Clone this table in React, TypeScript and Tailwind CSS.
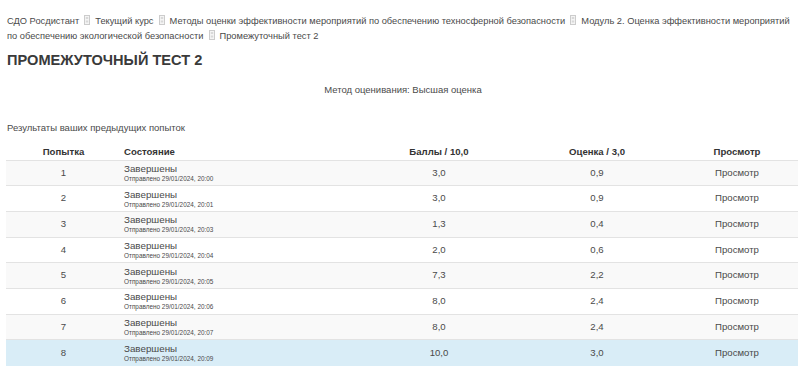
import React from "react";

const Sep = () => (
  <svg width="6" height="10" viewBox="0 0 6 10" className="inline-block mx-[5px] align-[-1px]">
    <rect x="0.5" y="0.5" width="5" height="9" fill="#f4f4f4" stroke="#cccccc" />
    <rect x="1.8" y="2" width="2.4" height="2" fill="#d8d8d8" />
    <rect x="1.8" y="5.5" width="2.4" height="2" fill="#d8d8d8" />
  </svg>
);

const rows = [
  { n: 1, t: "20:00", b: "3,0", o: "0,9" },
  { n: 2, t: "20:01", b: "3,0", o: "0,9" },
  { n: 3, t: "20:03", b: "1,3", o: "0,4" },
  { n: 4, t: "20:04", b: "2,0", o: "0,6" },
  { n: 5, t: "20:05", b: "7,3", o: "2,2" },
  { n: 6, t: "20:06", b: "8,0", o: "2,4" },
  { n: 7, t: "20:07", b: "8,0", o: "2,4" },
  { n: 8, t: "20:09", b: "10,0", o: "3,0" },
];

export default function App() {
  return (
    <div
      className="w-[800px] h-[367px] overflow-hidden bg-white text-[#4a4a4a] px-[6px] pt-[14px]"
      style={{ fontFamily: '"Liberation Sans", Arial, sans-serif' }}
    >
      <div className="text-[9.3px] leading-[15px] text-[#4a4a4a] pl-[1px]">
        СДО Росдистант<Sep />Текущий курс<Sep />Методы оценки эффективности мероприятий по обеспечению техносферной безопасности<Sep />Модуль 2. Оценка эффективности мероприятий по обеспечению экологической безопасности<Sep />Промежуточный тест 2
      </div>
      <h2 className="text-[14.6px] leading-[17px] font-bold text-[#3a3a3a] mt-[8px] pl-[1px]">ПРОМЕЖУТОЧНЫЙ ТЕСТ 2</h2>
      <div className="text-[9.5px] leading-[12px] text-center mt-[15px] pl-[6px] text-[#4a4a4a]">
        Метод оценивания: Высшая оценка
      </div>
      <div className="text-[9.5px] leading-[12px] mt-[26px] pl-[1px] text-[#4a4a4a]">
        Результаты ваших предыдущих попыток
      </div>
      <table className="w-[792px] mt-[11px] border-collapse text-[9.6px] text-[#4a4a4a]">
        <colgroup>
          <col className="w-[115px]" />
          <col className="w-[241px]" />
          <col className="w-[158px]" />
          <col className="w-[156px]" />
          <col className="w-[122px]" />
        </colgroup>
        <thead>
          <tr className="h-[15px] text-[#333]">
            <th className="text-center font-bold leading-[12px] pb-[1px]">Попытка</th>
            <th className="text-left font-bold pl-[3px] leading-[12px] pb-[1px]">Состояние</th>
            <th className="text-center font-bold leading-[12px] pb-[1px] pr-[4px]">Баллы / 10,0</th>
            <th className="text-center font-bold leading-[12px] pb-[1px] pr-[2px]">Оценка / 3,0</th>
            <th className="text-center font-bold leading-[12px] pb-[1px]">Просмотр</th>
          </tr>
        </thead>
        <tbody>
          {rows.map((r, i) => {
            const bg = r.n === 8 ? "bg-[#d9edf7]" : i % 2 === 0 ? "bg-[#f9f9f9]" : "bg-white";
            return (
              <tr key={r.n} className={`h-[25.7px] border-t border-[#e3e3e3] ${bg}`}>
                <td className="text-center">{r.n}</td>
                <td className="pl-[3px]">
                  <div className="leading-[11px] text-[9.8px]">Завершены</div>
                  <div className="leading-[9px] text-[6.4px]">Отправлено 29/01/2024, {r.t}</div>
                </td>
                <td className="text-center pr-[4px]">{r.b}</td>
                <td className="text-center pr-[2px]">{r.o}</td>
                <td className="text-center">Просмотр</td>
              </tr>
            );
          })}
        </tbody>
      </table>
    </div>
  );
}
